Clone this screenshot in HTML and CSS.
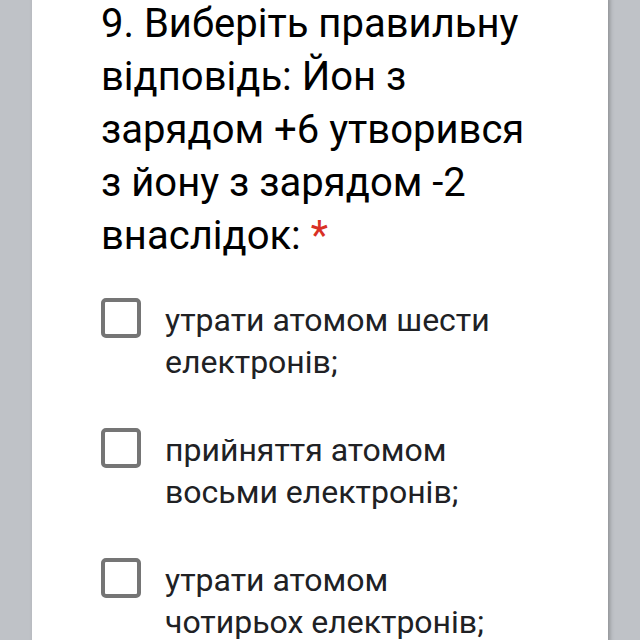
FILE: index.html
```html
<!DOCTYPE html>
<html lang="uk">
<head>
    <meta charset="UTF-8">
    <meta name="viewport" content="width=device-width, initial-scale=1.0">
    <title>Питання 9</title>
    <link rel="stylesheet" href="styles.css">
</head>
<body>
    <div class="card">
        <div class="question">
            9. Виберіть правильну відповідь: Йон з зарядом +6 утворився з йону з зарядом -2 внаслідок: <span class="required">*</span>
        </div>
        <div class="options">
            <label class="option">
                <span class="box"></span>
                <span class="text">утрати атомом шести електронів;</span>
            </label>
            <label class="option">
                <span class="box"></span>
                <span class="text">прийняття атомом восьми електронів;</span>
            </label>
            <label class="option">
                <span class="box"></span>
                <span class="text">утрати атомом чотирьох електронів;</span>
            </label>
        </div>
    </div>
</body>
</html>
```

FILE: styles.css
```css
html, body {
    margin: 0;
    height: 100%;
    overflow: hidden;
}
body {
    background-color: #bfc2c7;
    font-family: Roboto, "Noto Sans", sans-serif;
    color: #202124;
}
.card {
    margin-left: 32px;
    width: 576px;
    min-height: 100%;
    background: white;
    box-shadow: 2px 0 4px rgba(0, 0, 0, 0.25);
    padding: 0 70px 0 69px;
    box-sizing: border-box;
}
.question {
    font-size: 40px;
    line-height: 53px;
    margin-top: -3px;
    color: #000;
}
.required {
    color: #d93025;
}
.options {
    margin-top: 37px;
    display: flex;
    flex-direction: column;
    gap: 46px;
}
.option {
    display: flex;
    align-items: flex-start;
    gap: 24px;
}
.box {
    flex: none;
    width: 40px;
    height: 40px;
    box-sizing: border-box;
    border: 4px solid #757575;
    border-radius: 5px;
    margin-top: -1px;
}
.text {
    width: 340px;
    font-size: 32px;
    line-height: 42px;
}
```
